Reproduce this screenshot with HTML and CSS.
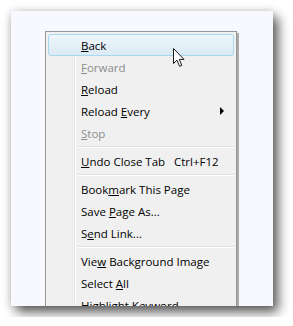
FILE: index.html
```html
<!DOCTYPE html>
<html lang="en">
<head>
    <meta charset="UTF-8">
    <title>Context Menu</title>
    <link rel="stylesheet" href="styles.css">
</head>
<body>
    <div class="panel">
        <!-- context menu -->
        <div class="menu">
            <div class="item active"><span><u>B</u>ack</span></div>
            <div class="item disabled"><span><u>F</u>orward</span></div>
            <div class="item"><span><u>R</u>eload</span></div>
            <div class="item"><span>Reload <u>E</u>very</span><i class="arrow"></i></div>
            <div class="item disabled"><span><u>S</u>top</span></div>
            <div class="sep"></div>
            <div class="item"><span class="label"><u>U</u>ndo Close Tab</span><span class="key">Ctrl+F12</span></div>
            <div class="sep"></div>
            <div class="item"><span>Book<u>m</u>ark This Page</span></div>
            <div class="item"><span>Save <u>P</u>age As...</span></div>
            <div class="item"><span>S<u>e</u>nd Link...</span></div>
            <div class="sep"></div>
            <div class="item"><span>Vie<u>w</u> Background Image</span></div>
            <div class="item"><span>Select <u>A</u>ll</span></div>
            <div class="item"><span>Highlight Keyword</span></div>
        </div>

        <svg class="cursor" width="13" height="20" viewBox="0 0 13 20">
            <path d="M0.5 0.5 L0.5 15.5 L4 12.2 L6.6 18.3 L8.8 17.4 L6.3 11.4 L11 11.4 Z" fill="#fff" stroke="#1a1a1a" stroke-width="1" stroke-linejoin="miter"/>
        </svg>
    </div>
</body>
</html>
```

FILE: styles.css
```css
body {
    margin: 0;
    padding: 11px;
    background-color: #ffffff;
    font-family: 'Open Sans', sans-serif;
    font-size: 11.5px;
}

.panel {
    position: relative;
    width: 262px;
    height: 295px;
    padding: 20px 0 0 34px;
    box-sizing: border-box;
    background-color: #f8f9fe;
    overflow: hidden;
    box-shadow: 5px 6px 11px rgba(0, 0, 0, 0.65), -1px 0 8px rgba(0, 0, 0, 0.12);
}

.menu {
    width: 192px;
    box-sizing: border-box;
    border: 1px solid #979797;
    padding: 2px 2px 40px 2px;
    background:
        linear-gradient(to right, transparent 28px, #e2e3e3 28px, #e2e3e3 29px, #ffffff 29px, #ffffff 30px, transparent 30px),
        #f0f0f0;
    box-shadow: 2px 2px 0 #a9a9a9;
}

.item {
    display: flex;
    align-items: center;
    height: 22px;
    padding-left: 32px;
    padding-right: 9px;
    color: #000000;
    border: 1px solid transparent;
    border-radius: 3px;
    box-sizing: border-box;
}

.item.active {
    border-color: #a8d8f0;
    background: linear-gradient(to bottom, #eef6fc, #dbeaf4);
}

.item.disabled {
    color: #8d8d8d;
}

.label {
    width: 93px;
}

.arrow {
    margin-left: auto;
    width: 0;
    height: 0;
    border-top: 4px solid transparent;
    border-bottom: 4px solid transparent;
    border-left: 4px solid #000000;
}

.sep {
    height: 6px;
    margin-left: 30px;
    background: linear-gradient(to bottom, transparent 2px, #e0e0e0 2px, #e0e0e0 3px, #ffffff 3px, #ffffff 4px, transparent 4px);
}

.cursor {
    position: absolute;
    left: 162px;
    top: 37px;
}
```
